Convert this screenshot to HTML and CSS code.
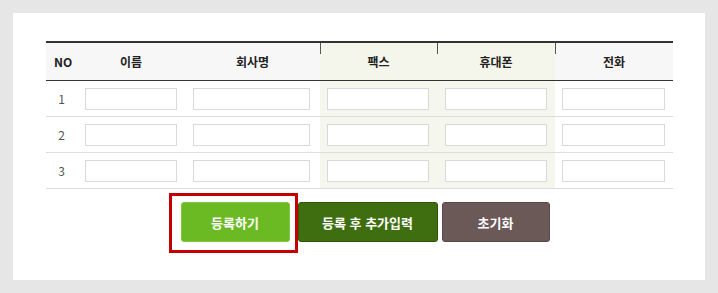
FILE: index.html
```html
<!DOCTYPE html>
<html lang="ko">
<head>
    <meta charset="UTF-8">
    <meta name="viewport" content="width=device-width, initial-scale=1.0">
    <title>연락처 등록</title>
    <link rel="stylesheet" href="styles.css">
</head>
<body>
    <div class="panel">
        <!-- Contact input table -->
        <table class="contact-table">
            <colgroup>
                <col class="c-no">
                <col class="c-name">
                <col class="c-company">
                <col class="c-fax">
                <col class="c-mobile">
                <col class="c-phone">
            </colgroup>
            <thead>
                <tr>
                    <th>NO</th>
                    <th>이름</th>
                    <th>회사명</th>
                    <th class="tint tick">팩스</th>
                    <th class="tint tick">휴대폰</th>
                    <th class="tick">전화</th>
                </tr>
            </thead>
            <tbody>
                <tr>
                    <td class="num">1</td>
                    <td><input type="text"></td>
                    <td class="wide"><input type="text"></td>
                    <td class="tint tight"><input type="text"></td>
                    <td class="tint"><input type="text"></td>
                    <td class="tight"><input type="text"></td>
                </tr>
                <tr>
                    <td class="num">2</td>
                    <td><input type="text"></td>
                    <td class="wide"><input type="text"></td>
                    <td class="tint tight"><input type="text"></td>
                    <td class="tint"><input type="text"></td>
                    <td class="tight"><input type="text"></td>
                </tr>
                <tr>
                    <td class="num">3</td>
                    <td><input type="text"></td>
                    <td class="wide"><input type="text"></td>
                    <td class="tint tight"><input type="text"></td>
                    <td class="tint"><input type="text"></td>
                    <td class="tight"><input type="text"></td>
                </tr>
            </tbody>
        </table>

        <!-- Buttons -->
        <div class="btn-row">
            <span class="marked"><button class="btn btn-save">등록하기</button></span>
            <button class="btn btn-more">등록 후 추가입력</button>
            <button class="btn btn-reset">초기화</button>
        </div>
    </div>
</body>
</html>
```

FILE: styles.css
```css
body {
    margin: 0;
    padding: 13px;
    background: #e6e6e6;
    font-family: "Noto Sans CJK KR", "Noto Sans", sans-serif;
    color: #222;
}

.panel {
    background: #fff;
    width: 692px;
    height: 267px;
    box-sizing: border-box;
    padding: 28px 32px 0 33px;
}

.contact-table {
    width: 627px;
    border-collapse: collapse;
    table-layout: fixed;
    border-top: 2px solid #333;
}

.c-no { width: 31px; }
.c-name { width: 108px; }
.c-company { width: 135px; }
.c-fax { width: 117px; }
.c-mobile { width: 118px; }
.c-phone { width: 118px; }

.contact-table th {
    height: 37px;
    padding: 0;
    background: #f7f7f7;
    font-size: 12px;
    font-weight: 700;
    color: #222;
    border-bottom: 1px solid #333;
    position: relative;
}

.contact-table th:first-child {
    text-align: left;
    padding-left: 8px;
}

.contact-table th.tint {
    background: #f4f6ec;
}

.contact-table th.tick::before {
    content: "";
    position: absolute;
    left: 0;
    top: 0;
    width: 1px;
    height: 11px;
    background: #555;
}

.contact-table td {
    height: 35px;
    padding: 0 8px;
    border-bottom: 1px solid #ddd;
}

.contact-table td.wide {
    padding-right: 10px;
}

.contact-table td.tight {
    padding-left: 7px;
}

.contact-table td.tint {
    background: #f5f7ef;
}

.contact-table td.num {
    padding: 0;
    text-align: center;
    font-size: 12px;
    color: #555;
}

.contact-table input {
    display: block;
    width: 100%;
    height: 22px;
    box-sizing: border-box;
    border: 1px solid #d9d9d9;
    background: #fff;
    margin: 0;
    padding: 0 4px;
}

.btn-row {
    display: flex;
    justify-content: center;
    margin-top: 13px;
    padding-left: 11px;
}

.btn {
    height: 40px;
    border-radius: 3px;
    color: #fff;
    font-family: inherit;
    font-size: 13px;
    font-weight: 700;
    cursor: pointer;
    padding: 0;
}

.btn-save {
    width: 109px;
    background: #6cba23;
    border: 1px solid #80c640;
}

.btn-more {
    width: 140px;
    margin-left: 8px;
    background: #3e6e10;
    border: 1px solid #2f560b;
}

.btn-reset {
    width: 108px;
    margin-left: 4px;
    background: #6b5957;
    border: 1px solid #584846;
}

/* red highlight box around the save button */
.marked {
    position: relative;
    display: block;
}

.marked::after {
    content: "";
    position: absolute;
    left: -12px;
    right: -8px;
    top: -9px;
    bottom: -11px;
    border: 3px solid #c40000;
    pointer-events: none;
}
```
